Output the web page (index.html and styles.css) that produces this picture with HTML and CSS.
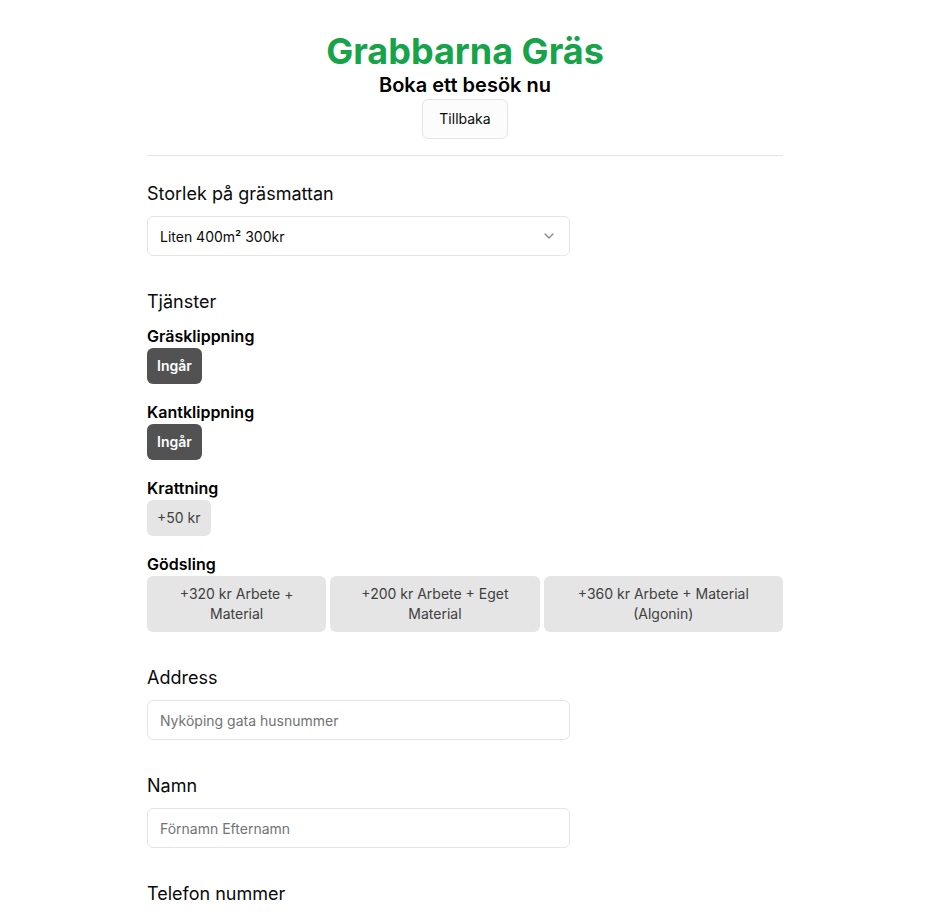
FILE: index.html
```html
<!DOCTYPE html>
<html lang="sv">
<head>
<meta charset="utf-8">
<title>Grabbarna Gräs – Boka</title>
<link rel="stylesheet" href="styles.css">
</head>
<body>
<main class="page">
  <header class="head">
    <h1 class="brand">Grabbarna Gräs</h1>
    <h2 class="subtitle">Boka ett besök nu</h2>
    <button class="back">Tillbaka</button>
  </header>
  <hr class="divider">

  <section class="field">
    <label class="label">Storlek på gräsmattan</label>
    <div class="select">
      <span>Liten 400m² 300kr</span>
      <svg class="chev" width="16" height="16" viewBox="0 0 24 24" fill="none" stroke="currentColor" stroke-width="2" stroke-linecap="round" stroke-linejoin="round"><path d="m6 9 6 6 6-6"/></svg>
    </div>
  </section>

  <section class="field">
    <div class="label">Tjänster</div>
    <div class="services">
      <div class="service">
        <div class="service-name">Gräsklippning</div>
        <div class="opts"><button class="opt opt-on">Ingår</button></div>
      </div>
      <div class="service">
        <div class="service-name">Kantklippning</div>
        <div class="opts"><button class="opt opt-on">Ingår</button></div>
      </div>
      <div class="service">
        <div class="service-name">Krattning</div>
        <div class="opts"><button class="opt">+50 kr</button></div>
      </div>
      <div class="service">
        <div class="service-name">Gödsling</div>
        <div class="opts opts-grid">
          <button class="opt">+320 kr Arbete + Material</button>
          <button class="opt">+200 kr Arbete + Eget Material</button>
          <button class="opt">+360 kr Arbete + Material (Algonin)</button>
        </div>
      </div>
    </div>
  </section>

  <section class="field">
    <label class="label" for="addr">Address</label>
    <input id="addr" class="input" placeholder="Nyköping gata husnummer">
  </section>

  <section class="field">
    <label class="label" for="namn">Namn</label>
    <input id="namn" class="input" placeholder="Förnamn Efternamn">
  </section>

  <section class="field">
    <label class="label" for="tel">Telefon nummer</label>
    <input id="tel" class="input" placeholder="07X XXX XX XX">
  </section>
</main>
</body>
</html>
```

FILE: styles.css
```css
* { box-sizing: border-box; }
html, body { margin: 0; padding: 0; background: #fff; }
body {
  font-family: Inter, "Noto Sans", sans-serif;
  color: #0a0a0a;
}
.page {
  width: 636px;
  margin: 0 auto;
  padding: 31px 0 40px;
}
.head {
  display: flex;
  flex-direction: column;
  align-items: center;
}
.brand {
  margin: 0;
  font-size: 36px;
  line-height: 40px;
  font-weight: 700;
  color: #16a34a;
}
.subtitle {
  margin: 0;
  font-size: 20px;
  line-height: 28px;
  font-weight: 600;
  color: #000;
}
.back {
  font-family: inherit;
  font-size: 14px;
  line-height: 20px;
  padding: 9px 16px;
  border: 1px solid #e5e5e5;
  border-radius: 6px;
  background: #fcfcfc;
  color: #0a0a0a;
}
.divider {
  border: 0;
  border-top: 1px solid #e5e5e5;
  margin: 16px 0 24px;
}
.field {
  display: flex;
  flex-direction: column;
  gap: 8px;
  margin-bottom: 32px;
}
.label {
  font-size: 18px;
  line-height: 28px;
  font-weight: 400;
  color: #0a0a0a;
}
.select {
  width: 423px;
  height: 40px;
  border: 1px solid #e5e5e5;
  border-radius: 6px;
  display: flex;
  align-items: center;
  justify-content: space-between;
  padding: 0 12px;
  font-size: 14px;
  color: #0a0a0a;
}
.chev { color: #8a8a8a; }
.services {
  display: flex;
  flex-direction: column;
  gap: 16px;
}
.service-name {
  font-size: 16px;
  line-height: 24px;
  font-weight: 600;
  color: #000;
}
.opts { display: flex; }
.opts-grid {
  display: grid;
  grid-template-columns: 179fr 209fr 239fr;
  gap: 4px;
}
.opt {
  font-family: inherit;
  font-size: 14px;
  line-height: 20px;
  padding: 8px 10px;
  border: 0;
  border-radius: 6px;
  background: #e5e5e5;
  color: #404040;
  text-align: center;
}
.opt-on {
  background: #525252;
  color: #fff;
  font-weight: 600;
}
.input {
  width: 423px;
  height: 40px;
  border: 1px solid #e5e5e5;
  border-radius: 6px;
  padding: 0 12px;
  font-family: inherit;
  font-size: 14px;
  color: #0a0a0a;
  outline: none;
}
.input::placeholder { color: #737373; }
```
